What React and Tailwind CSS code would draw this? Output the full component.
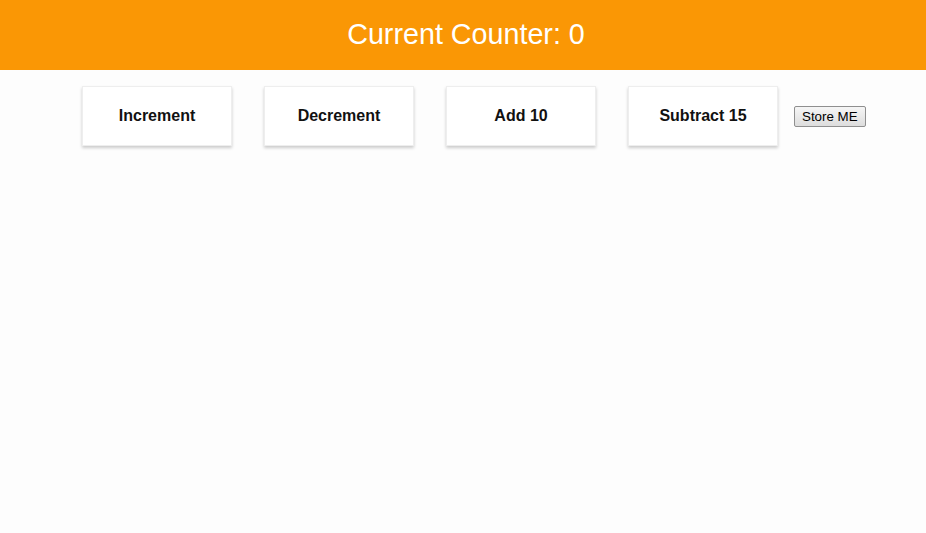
export default function App() {
  const actions = ['Increment', 'Decrement', 'Add 10', 'Subtract 15'];

  return (
    <div className="min-h-[533px] bg-[#fdfdfd]" style={{ fontFamily: '"Liberation Sans", Arial, sans-serif' }}>
      <header className="h-[70px] bg-[#fa9705] flex items-center justify-center pl-[6px]">
        <h1 className="text-[28.7px] text-white font-normal">Current Counter: 0</h1>
      </header>

      <div className="flex items-center pl-[82px] pt-4">
        {actions.map((label, i) => (
          <div
            key={label}
            className={`w-[150px] h-[60px] flex items-center justify-center bg-white border border-[#eeeeee] shadow-[0_2px_3px_rgba(0,0,0,0.2)] cursor-pointer ${i > 0 ? 'ml-8' : ''}`}
          >
            <span className="text-base font-bold text-[#111]">{label}</span>
          </div>
        ))}
        <button
          type="button"
          className="ml-4 mt-[1px] h-[21px] px-[7px] text-[13.33px] text-black bg-gradient-to-b from-[#f6f6f6] to-[#dddddd] border border-[#8f8f8f] rounded-[2px]"
        >
          Store ME
        </button>
      </div>
    </div>
  );
}
